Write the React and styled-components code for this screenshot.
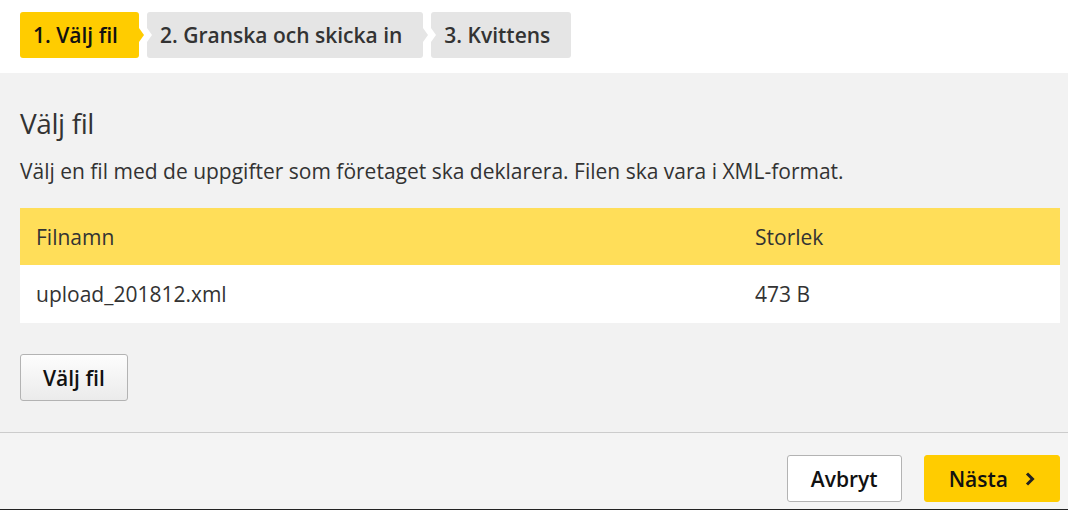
import React from 'react'
import styled, { createGlobalStyle } from 'styled-components'

const GlobalStyle = createGlobalStyle`
  html, body {
    margin: 0;
    padding: 0;
    background: #f2f2f2;
    font-family: 'Open Sans', 'Noto Sans', sans-serif;
    color: #333;
  }
  * {
    box-sizing: border-box;
  }
`

const Page = styled.div`
  width: 1068px;
  height: 510px;
  display: flex;
  flex-direction: column;
  border-bottom: 1px solid #222;
`

const StepBar = styled.nav`
  background: #fff;
  height: 73px;
  padding: 12px 20px 0;
  display: flex;
  gap: 8px;
`

const Step = styled.div`
  position: relative;
  height: 46px;
  display: flex;
  align-items: center;
  padding: 0 21px 0 13px;
  border-radius: 3px;
  font-size: 21px;
  font-weight: 600;
  color: ${({ active }) => (active ? '#111' : '#333')};
  background: ${({ active }) => (active ? '#ffcc00' : '#e5e5e5')};

  ${({ arrow, active }) =>
    arrow &&
    `
    &::after {
      content: '';
      position: absolute;
      right: -5px;
      top: 16px;
      border-top: 7px solid transparent;
      border-bottom: 7px solid transparent;
      border-left: 5px solid ${active ? '#ffcc00' : '#e5e5e5'};
    }
  `}

  ${({ notch }) =>
    notch &&
    `
    &::before {
      content: '';
      position: absolute;
      left: 0;
      top: 16px;
      border-top: 7px solid transparent;
      border-bottom: 7px solid transparent;
      border-left: 5px solid #fff;
    }
  `}
`

const Main = styled.main`
  padding: 0 8px 0 20px;
  height: 360px;
  border-bottom: 1px solid #ccc;
  display: flex;
  flex-direction: column;
  align-items: flex-start;
`

const Title = styled.h1`
  margin: 33px 0 0;
  font-size: 28px;
  font-weight: 500;
  letter-spacing: -0.4px;
  line-height: 34px;
  color: #333;
`

const Lead = styled.p`
  margin: 17px 0 0;
  font-size: 21px;
  line-height: 28px;
  color: #333;
`

const Table = styled.div`
  margin-top: 23px;
  width: 100%;
  display: grid;
  grid-template-columns: 719px 1fr;
`

const Cell = styled.div`
  display: flex;
  align-items: center;
  padding: 0 16px;
  font-size: 21px;
  color: #333;
  height: ${({ head }) => (head ? '57px' : '58px')};
  background: ${({ head }) => (head ? '#ffde59' : '#fff')};
`

const Button = styled.button`
  font-family: inherit;
  font-size: 21px;
  font-weight: 600;
  color: #111;
  height: 47px;
  padding: 0 ${({ pad }) => pad || '23px'};
  border-radius: 3px;
  display: flex;
  align-items: center;
  gap: 17px;
  cursor: pointer;
  border: 1px solid ${({ variant }) => (variant === 'primary' ? '#ffcc00' : '#b3b3b3')};
  background: ${({ variant }) =>
    variant === 'primary'
      ? '#ffcc00'
      : variant === 'plain'
      ? '#fff'
      : 'linear-gradient(#fdfdfd, #ebebeb)'};
`

const PickButton = styled(Button)`
  margin-top: 31px;
`

const Footer = styled.footer`
  flex: 1;
  background: #f4f4f4;
  display: flex;
  justify-content: flex-end;
  align-items: flex-start;
  gap: 22px;
  padding: 22px 8px 0 0;
`

const Chevron = () => (
  <svg width="10" height="14" viewBox="0 0 10 14" aria-hidden="true">
    <path d="M2 1.5 L7.5 7 L2 12.5" fill="none" stroke="#222" strokeWidth="3" />
  </svg>
)

const App = () => (
  <>
    <GlobalStyle />
    <Page>
      <StepBar>
        <Step active arrow>1. Välj fil</Step>
        <Step notch arrow>2. Granska och skicka in</Step>
        <Step notch>3. Kvittens</Step>
      </StepBar>
      <Main>
        <Title>Välj fil</Title>
        <Lead>Välj en fil med de uppgifter som företaget ska deklarera. Filen ska vara i XML-format.</Lead>
        <Table>
          <Cell head>Filnamn</Cell>
          <Cell head>Storlek</Cell>
          <Cell>upload_201812.xml</Cell>
          <Cell>473 B</Cell>
        </Table>
        <PickButton pad="22px">Välj fil</PickButton>
      </Main>
      <Footer>
        <Button variant="plain">Avbryt</Button>
        <Button variant="primary" pad="24px">
          Nästa
          <Chevron />
        </Button>
      </Footer>
    </Page>
  </>
)

export default App
